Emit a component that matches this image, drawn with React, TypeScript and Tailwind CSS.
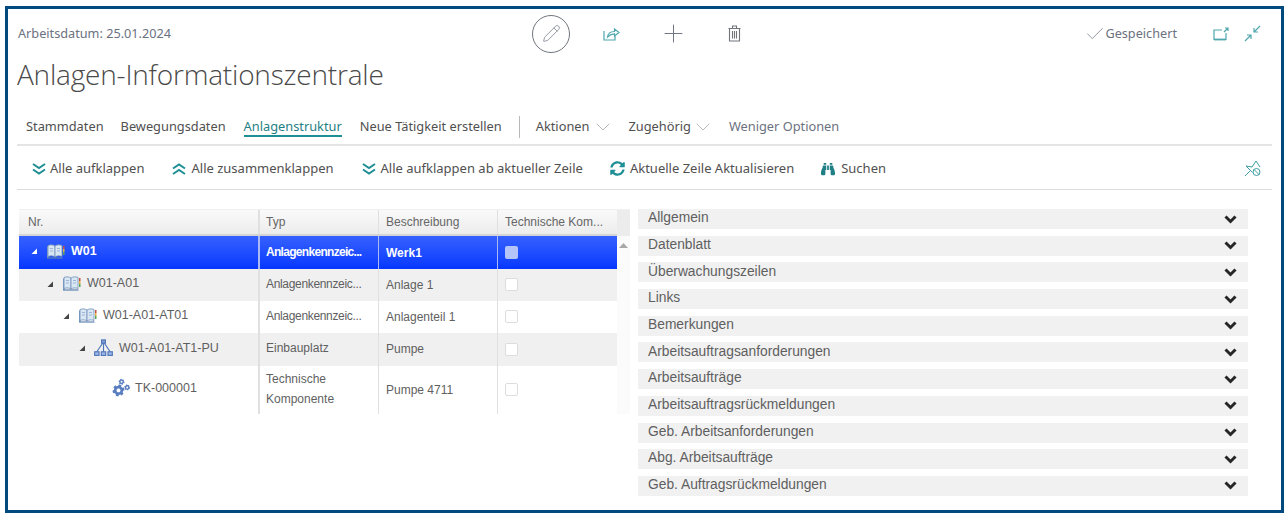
import { Check, ChevronDown, Pencil, Plus } from "lucide-react";
import { FaBinoculars, FaCogs, FaSyncAlt } from "react-icons/fa";

const uiFont = "font-['Noto_Sans','Open_Sans',sans-serif]";

function ShareIcon() {
  return (
    <svg width="17" height="15" viewBox="0 0 17 15" fill="none" stroke="#4fa7ad" strokeWidth="1.2">
      <path d="M1 5v9h11V10" />
      <path d="M4.5 11C5 7 8 5.500 11.500 5.500V3L16 6.500 11.500 10V7.800C8.500 7.800 6.500 9 4.500 11Z" />
    </svg>
  );
}

function TrashIcon() {
  return (
    <svg width="13" height="17" viewBox="0 0 13 17" fill="none" stroke="#70757c" strokeWidth="1.1">
      <path d="M0.500 3.500h12M4.500 3.500V1h4v2.500" />
      <path d="M1.500 3.500v12.500h10V3.500" />
      <path d="M4.500 6v7.500M6.500 6v7.500M8.500 6v7.500" />
    </svg>
  );
}

function PopoutIcon() {
  return (
    <svg width="16" height="14" viewBox="0 0 16 14" fill="none" stroke="#4fa7ad" strokeWidth="1.2">
      <path d="M9 3H1v9.500h12V6" />
      <path d="M1 12.500h12" strokeWidth="1.800" />
      <path d="M11 5l4-4M12 1h3v3" />
    </svg>
  );
}

function CollapseIcon() {
  return (
    <svg width="17" height="17" viewBox="0 0 17 17" fill="none" stroke="#4fa7ad" strokeWidth="1.200">
      <path d="M10 7l6-6M10 3v4h4" />
      <path d="M7 10l-6 6M3 10h4v4" />
    </svg>
  );
}

function PinIcon() {
  return (
    <svg width="17" height="17" viewBox="0 0 17 17" fill="none" stroke="#3f9ea4" strokeWidth="1">
      <path d="M1 16l6-6" />
      <path d="M2 6l6 1 4-6 4 6" />
      <path d="M2 6l6.500 6.500" />
      <circle cx="12.500" cy="12" r="3.500" />
      <path d="M10 9.500l5 5" />
    </svg>
  );
}

function DoubleDown() {
  return (
    <svg width="14" height="12" viewBox="0 0 14 12" fill="none" stroke="#1f8f96" strokeWidth="2">
      <path d="M1 1l6 4 6-4" />
      <path d="M1 6.500l6 4 6-4" />
    </svg>
  );
}

function DoubleUp() {
  return (
    <svg width="14" height="12" viewBox="0 0 14 12" fill="none" stroke="#1f8f96" strokeWidth="2">
      <path d="M1 5.500l6-4 6 4" />
      <path d="M1 11l6-4 6 4" />
    </svg>
  );
}

function HeavyChevron() {
  return (
    <svg width="13" height="9" viewBox="0 0 13 9" fill="none" stroke="#262626" strokeWidth="3">
      <path d="M1.500 1.500l5 5 5-5" />
    </svg>
  );
}

function BookIcon() {
  return (
    <svg width="19" height="15" viewBox="0 0 19 15">
      <path d="M1 2.500h1.500V14H1z" fill="#7d9cc4" />
      <path d="M2 1.500c2.500-1 5-.8 7 .5v11c-2-1.300-4.500-1.500-7-.5z" fill="#d9e6f4" stroke="#6f8fb8" strokeWidth="0.800" />
      <path d="M9 2c2-1.300 4.500-1.500 7-.5v11c-2.500-1-5-.8-7 .5z" fill="#d9e6f4" stroke="#6f8fb8" strokeWidth="0.800" />
      <path d="M1 14h15.500" stroke="#5f81ad" strokeWidth="1.200" />
      <path d="M4 4.500h3M4 7h3M11 4.500h3M11 7h3" stroke="#9db5d6" strokeWidth="1" />
      <path d="M17 2h1.500v3H17z" fill="#c9504a" />
      <path d="M17 5h1.500v3H17z" fill="#e0b040" />
      <path d="M17 8h1.500v3H17z" fill="#58a858" />
    </svg>
  );
}

function NetworkIcon() {
  return (
    <svg width="19" height="18" viewBox="0 0 20 18" fill="none" stroke="#4f76b8" strokeWidth="1.200">
      <rect x="8" y="0.500" width="4" height="3.500" fill="#7f9fd6" />
      <path d="M10 4v9M9 4l-6 9M11 4l6 9" />
      <rect x="0.700" y="13" width="4.600" height="3.800" fill="#9db8e4" />
      <rect x="7.700" y="13" width="4.600" height="3.800" fill="#9db8e4" />
      <rect x="14.700" y="13" width="4.600" height="3.800" fill="#9db8e4" />
    </svg>
  );
}

function Arrow({ light }: { light?: boolean }) {
  return (
    <svg width="6" height="6" viewBox="0 0 6 6" className="mr-[9px] shrink-0">
      <path d="M6 0.500v5.500H0.500z" fill={light ? "#ffffff" : "#444444"} />
    </svg>
  );
}

const rows = [
  { nr: "W01", indent: 12, icon: "book", typ: ["Anlagenkennzeic..."], desc: "Werk1", h: "h-[33px]", tone: "selected" },
  { nr: "W01-A01", indent: 28, icon: "book", typ: ["Anlagenkennzeic..."], desc: "Anlage 1", h: "h-[32px]", tone: "gray" },
  { nr: "W01-A01-AT01", indent: 44, icon: "book", typ: ["Anlagenkennzeic..."], desc: "Anlagenteil 1", h: "h-[32px]", tone: "white" },
  { nr: "W01-A01-AT1-PU", indent: 60, icon: "network", typ: ["Einbauplatz"], desc: "Pumpe", h: "h-[33px]", tone: "gray" },
  { nr: "TK-000001", indent: 93, icon: "gears", typ: ["Technische", "Komponente"], desc: "Pumpe 4711", h: "h-[48px]", tone: "white" },
];

const sections = [
  "Allgemein",
  "Datenblatt",
  "Überwachungszeilen",
  "Links",
  "Bemerkungen",
  "Arbeitsauftragsanforderungen",
  "Arbeitsaufträge",
  "Arbeitsauftragsrückmeldungen",
  "Geb. Arbeitsanforderungen",
  "Abg. Arbeitsaufträge",
  "Geb. Auftragsrückmeldungen",
];

function TreeRow({ row }: { row: (typeof rows)[number] }) {
  const selected = row.tone === "selected";
  const bg = selected
    ? "bg-gradient-to-b from-[#3560ff] to-[#0636ff] text-white font-bold"
    : row.tone === "gray"
      ? "bg-[#f0f0f0] text-[#5f5f5f]"
      : "bg-white text-[#5f5f5f]";
  const sep = selected ? "border-[#a9b9f5]" : "border-[#e0e0e0]";
  const lift = selected ? "" : "pb-[1px]";
  const typTracking = row.typ[0].endsWith("...") ? (selected ? "tracking-[-0.7px]" : "tracking-[-0.33px]") : "";
  return (
    <div className={`grid grid-cols-[239px_120px_119px_120px] text-[12px] ${row.h} ${bg}`}>
      <div className="flex items-center pb-[3px]" style={{ paddingLeft: row.indent }}>
        {row.icon !== "gears" && <Arrow light={selected} />}
        {row.icon === "book" && <BookIcon />}
        {row.icon === "network" && <NetworkIcon />}
        {row.icon === "gears" && <FaCogs className="text-[#5a7fc0] text-[17px] -rotate-45" />}
        <span className="text-[12.500px] ml-[6px]">{row.nr}</span>
      </div>
      <div className={`flex flex-col justify-center border-l-2 ${sep} pl-[6px] leading-[19.500px] ${lift} ${typTracking}`}>
        {row.typ.map((t) => (
          <span key={t}>{t}</span>
        ))}
      </div>
      <div className={`flex items-center border-l ${sep} pl-[7px] ${lift}`}>{row.desc}</div>
      <div className={`flex items-center border-l ${sep} pl-[7px] ${lift}`}>
        {selected ? (
          <span className="w-[13px] h-[13px] rounded-[2px] bg-[#b4c3f8]" />
        ) : (
          <span className="w-[13px] h-[13px] rounded-[2px] border border-[#dddddd] bg-white" />
        )}
      </div>
    </div>
  );
}

export default function App() {
  return (
    <div className="w-[1288px] h-[517px] bg-white pt-[6px] pl-[5px] overflow-hidden">
      <div className={`w-[1279px] h-[507px] border-[3px] border-[#004a80] px-[9px] ${uiFont}`}>
        <div className="flex items-center h-[48px] pt-[1px] text-[12.700px] text-[#6b7280]">
          <div className="w-[515px] pl-[1px] pt-[1px]">Arbeitsdatum: 25.01.2024</div>
          <div className="flex items-center">
            <div className="w-[38px] h-[38px] rounded-full border border-[#70757c] flex items-center justify-center">
              <Pencil size={19} strokeWidth={0.9} color="#6b7280" />
            </div>
            <div className="ml-[33px]">
              <ShareIcon />
            </div>
            <Plus className="ml-[39px]" size={29} strokeWidth={0.8} color="#6b7280" />
            <div className="ml-[40px]">
              <TrashIcon />
            </div>
          </div>
          <div className="ml-auto flex items-center pr-[11px]">
            <Check size={22} strokeWidth={0.8} color="#6b7280" className="-mr-[2px]" />
            <span className="ml-[1px] pt-[1px]">Gespeichert</span>
            <div className="ml-[36px]">
              <PopoutIcon />
            </div>
            <div className="ml-[15px]">
              <CollapseIcon />
            </div>
          </div>
        </div>

        <h1 className="-mt-[1px] text-[28px] font-light leading-[36px] h-[36px] text-[#4a4a4a] font-['Open_Sans',sans-serif] tracking-[-0.2px]">
          Anlagen-Informationszentrale
        </h1>

        <div className="mt-[20px] h-[34px] flex items-center pl-[9px] pb-[3px] text-[12.800px] text-[#505050] border-b-2 border-[#e4e4e4]">
          <span>Stammdaten</span>
          <span className="ml-[17px]">Bewegungsdaten</span>
          <span className="ml-[18px] text-[#1f7f85] border-b-2 border-[#1f8f96] leading-[17px] mt-[2px]">Anlagenstruktur</span>
          <span className="ml-[18px]">Neue Tätigkeit erstellen</span>
          <span className="ml-[17px] w-px h-[22px] bg-[#b8b8b8]" />
          <span className="ml-[16px]">Aktionen</span>
          <ChevronDown className="ml-[2px]" size={24} strokeWidth={0.6} color="#888888" />
          <span className="ml-[13px]">Zugehörig</span>
          <ChevronDown size={24} strokeWidth={0.6} color="#888888" />
          <span className="ml-[14px] text-[#6b7280]">Weniger Optionen</span>
        </div>

        <div className="h-[44px] flex items-center pl-[15px] pr-[11px] pt-[2px] text-[13px] text-[#505050] border-b border-[#dcdcdc]">
          <DoubleDown />
          <span className="ml-[4px]">Alle aufklappen</span>
          <div className="ml-[28px]">
            <DoubleUp />
          </div>
          <span className="ml-[5px]">Alle zusammenklappen</span>
          <div className="ml-[28px]">
            <DoubleDown />
          </div>
          <span className="ml-[5px]">Alle aufklappen ab aktueller Zeile</span>
          <FaSyncAlt className="ml-[27px]" size={15} color="#1f8f96" />
          <span className="ml-[5px]">Aktuelle Zeile Aktualisieren</span>
          <FaBinoculars className="ml-[27px]" size={14} color="#1f7f85" />
          <span className="ml-[6px]">Suchen</span>
          <div className="ml-auto">
            <PinIcon />
          </div>
        </div>

        <div className="mt-[19px] flex font-['Liberation_Sans',sans-serif]">
          <div className="w-[611px] ml-[2px] shrink-0 border-t border-[#f0f0f0]">
            <div className="flex">
              <div className="w-[598px]">
                <div className="grid grid-cols-[239px_120px_119px_120px] h-[26px] text-[12px] text-[#666666] bg-gradient-to-b from-[#fafafa] to-[#ececec] border-b-2 border-[#d4d4d4]">
                  <div className="flex items-center pl-[9px]">Nr.</div>
                  <div className="flex items-center border-l-2 border-[#e0e0e0] pl-[6px]">Typ</div>
                  <div className="flex items-center border-l border-[#e0e0e0] pl-[7px]">Beschreibung</div>
                  <div className="flex items-center border-l border-[#e0e0e0] pl-[7px]">Technische Kom...</div>
                </div>
                {rows.map((row) => (
                  <TreeRow key={row.nr} row={row} />
                ))}
              </div>
              <div className="w-[13px] bg-[#fbfbfb]">
                <div className="h-[26px] bg-[#ececec]" />
                <svg width="9" height="5" viewBox="0 0 9 5" className="ml-[2px] mt-[7px]">
                  <path d="M4.500 0L9 5H0z" fill="#a8a8a8" />
                </svg>
              </div>
            </div>
          </div>

          <div className="ml-[8px] w-[610px] flex flex-col gap-[6.700px] text-[13.800px] text-[#5f5f5f]">
            {sections.map((s) => (
              <div key={s} className="h-[20px] bg-[#f1f1f1] flex items-center justify-between pl-[10px] pr-[11px]">
                <span className="pb-[1px]">{s}</span>
                <HeavyChevron />
              </div>
            ))}
          </div>
        </div>
      </div>
    </div>
  );
}
